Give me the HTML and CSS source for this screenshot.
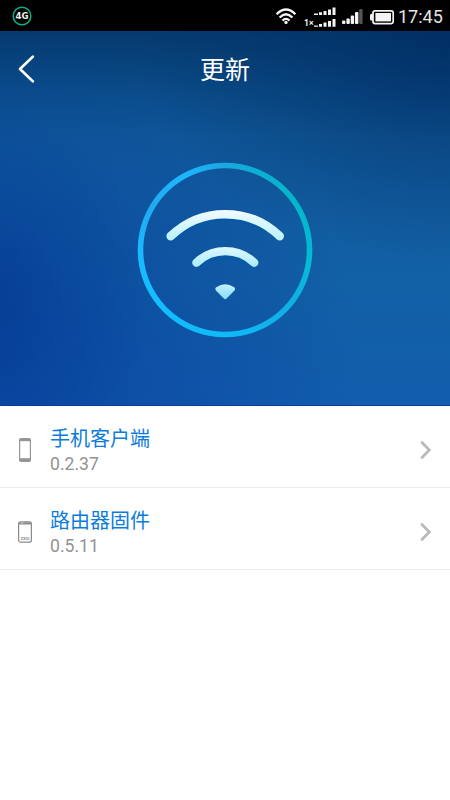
FILE: index.html
```
<!DOCTYPE html>
<html lang="zh-CN">
<head>
    <meta charset="UTF-8">
    <meta name="viewport" content="width=device-width, initial-scale=1.0">
    <title>更新</title>
    <link rel="stylesheet" href="styles.css">
</head>
<body>
    <div class="status-bar">
        <svg class="network" width="20" height="20" viewBox="0 0 20 20">
            <circle cx="10" cy="10" r="8.8" fill="none" stroke="#0cb18c" stroke-width="1.5"/>
            <text x="10" y="13.2" text-anchor="middle" textLength="13" lengthAdjust="spacingAndGlyphs">4G</text>
        </svg>

        <svg class="status-icons" width="122" height="31" viewBox="0 0 122 31">
            <!-- wifi -->
            <g fill="none" stroke="#f4f4f4" stroke-width="2.3">
                <path d="M4.6 14.2Q14 4.9 23.4 14.2"/>
                <path d="M7.6 17.5Q14 11 20.4 17.5"/>
                <path d="M10.5 20.6Q14 17.2 17.5 20.6"/>
            </g>
            <circle cx="14" cy="22.4" r="1.7" fill="#f4f4f4"/>
            <!-- dual sim signal -->
            <g fill="#f4f4f4">
                <path d="M42 13.6h4v1.4h-4zM47 12.2h3v2.8h-3zM51.5 11h3v4h-3zM56 9.5h3v5.5h-3zM60.5 7.5h3v7.5h-3z"/>
                <path d="M42 25.4h4v1.4h-4zM47 24h3v2.8h-3zM51.5 22.6h3v4.2h-3zM56 21h3v5.8h-3zM60.5 19h3v7.8h-3z"/>
                <text x="32" y="26" textLength="9.5" lengthAdjust="spacingAndGlyphs">1×</text>
            </g>
            <!-- signal -->
            <g fill="#f4f4f4">
                <rect x="70" y="20.5" width="3.4" height="3.5" rx="1"/>
                <rect x="74.4" y="18.5" width="3.4" height="5.5" rx="1"/>
                <rect x="78.7" y="15.5" width="3.4" height="8.5" rx="1"/>
                <rect x="83" y="12" width="3.4" height="12" rx="1"/>
                <rect x="87.2" y="9" width="3.4" height="15" rx="1" fill="#555"/>
            </g>
            <!-- battery -->
            <rect x="98" y="13.8" width="5" height="6.6" rx="1.5" fill="#f4f4f4"/>
            <rect x="101" y="10.8" width="20.2" height="12.8" rx="2" fill="#000" stroke="#f4f4f4" stroke-width="1.7"/>
            <rect x="103.4" y="13" width="15.6" height="8.4" fill="#f4f4f4"/>
        </svg>
        <span class="time">17:45</span>
    </div>

    <div class="hero">
        <div class="title-bar">
            <svg class="back" width="18" height="30" viewBox="0 0 18 30">
                <path d="M14.9 2.6L2 15L14.9 27.4" fill="none" stroke="#fff" stroke-width="2.7" stroke-linecap="round" stroke-linejoin="round"/>
            </svg>
            <h1>更新</h1>
        </div>

        <div class="ring">
            <svg width="176" height="176" viewBox="0 0 176 176">
                <defs>
                    <linearGradient id="wave" gradientUnits="userSpaceOnUse" x1="0" y1="47" x2="0" y2="80">
                        <stop offset="0" stop-color="#f3fcff"/>
                        <stop offset="1" stop-color="#b5f1fa"/>
                    </linearGradient>
                    <linearGradient id="wave-small" gradientUnits="userSpaceOnUse" x1="0" y1="84" x2="0" y2="106">
                        <stop offset="0" stop-color="#e0f8ff"/>
                        <stop offset="1" stop-color="#a8ebfb"/>
                    </linearGradient>
                    <linearGradient id="dot" x1="0" y1="0" x2="0" y2="1">
                        <stop offset="0" stop-color="#c4f1fd"/>
                        <stop offset="1" stop-color="#82ddfd"/>
                    </linearGradient>
                </defs>
                <g fill="none" stroke="#005aab" stroke-width="8" stroke-linecap="round" opacity=".45">
                    <path d="M50 65A78.5 78.5 0 0 1 126 65"/>
                    <path d="M68 98A41.8 41.8 0 0 1 108 98"/>
                </g>
                <path d="M33.7 74.2A78.5 78.5 0 0 1 142.7 74.2" fill="none" stroke="url(#wave)" stroke-width="8.6" stroke-linecap="round"/>
                <path d="M59.4 100.7A41.8 41.8 0 0 1 117.2 100.7" fill="none" stroke="url(#wave-small)" stroke-width="8.4" stroke-linecap="round"/>
                <path d="M79.2 125.2Q88.2 119.2 97.2 125.2Q99 126.9 97 129L89.6 136.6Q88.2 138 86.8 136.6L79.4 129Q77.4 126.9 79.2 125.2z" fill="url(#dot)"/>
            </svg>
        </div>
    </div>

    <ul class="list">
        <li>
            <svg class="device" width="18" height="26" viewBox="0 0 18 26">
                <rect x="3" y="1" width="12" height="24" rx="2" fill="#959595"/>
                <rect x="4.2" y="4.2" width="9.6" height="17" fill="#fff"/>
            </svg>
            <div class="info">
                <h2>手机客户端</h2>
                <p>0.2.37</p>
            </div>
            <svg class="arrow" width="12" height="20" viewBox="0 0 12 20">
                <path d="M2 2.5L9.3 10L2 17.5" fill="none" stroke="#b9b9b9" stroke-width="2.7" stroke-linecap="round"/>
            </svg>
        </li>
        <li>
            <svg class="device" width="18" height="26" viewBox="0 0 18 26">
                <rect x="2.6" y="2.8" width="12.8" height="20.4" rx="2" fill="#fff" stroke="#8c8c8c" stroke-width="1.2"/>
                <path d="M3 4.4h12" stroke="#8c8c8c" stroke-width="2.2"/>
                <path d="M4.5 3.9h3" stroke="#ddd" stroke-width=".8"/>
                <text x="9" y="20.5" text-anchor="middle" textLength="9" lengthAdjust="spacingAndGlyphs">ZXIU</text>
            </svg>
            <div class="info">
                <h2>路由器固件</h2>
                <p>0.5.11</p>
            </div>
            <svg class="arrow" width="12" height="20" viewBox="0 0 12 20">
                <path d="M2 2.5L9.3 10L2 17.5" fill="none" stroke="#b9b9b9" stroke-width="2.7" stroke-linecap="round"/>
            </svg>
        </li>
    </ul>
</body>
</html>
```

FILE: styles.css
```
* {
    box-sizing: border-box;
    margin: 0;
    padding: 0;
}

body {
    font-family: Roboto, "Noto Sans CJK SC", sans-serif;
    background-color: #fff;
    min-height: 800px;
}

.status-bar {
    display: flex;
    align-items: center;
    height: 31px;
    padding: 0 7px 0 12px;
    background-color: #000;
}

.network text {
    font: bold 9px "DejaVu Sans", sans-serif;
    fill: #eee;
}

.status-icons {
    margin-left: auto;
}

.status-icons text {
    font: bold 9px Roboto, sans-serif;
}

.time {
    width: 45px;
    margin-left: 4px;
    padding-top: 3px;
    color: #e4e4e4;
    font-size: 18px;
    line-height: 28px;
    white-space: nowrap;
}

.hero {
    height: 375px;
    border-bottom: 1px solid #0b3e9b;
    background:
        radial-gradient(ellipse 170px 190px at -20px 265px, rgba(3, 58, 145, 0.75), rgba(3, 58, 145, 0.3) 50%, rgba(3, 58, 145, 0)),
        radial-gradient(ellipse 330px 230px at 460px 0, rgba(0, 44, 98, 0.8), rgba(0, 44, 98, 0.35) 50%, rgba(0, 44, 98, 0)),
        radial-gradient(ellipse 360px 330px at 0 330px, rgba(8, 64, 158, 0.75), rgba(8, 64, 158, 0.4) 50%, rgba(8, 64, 158, 0)),
        linear-gradient(180deg, #053a70 0, #074178 25px, #0a4c88 60px, #105898 105px, #115c9f 160px, #1260a5 250px, #125dad 375px);
}

.title-bar {
    display: flex;
    align-items: center;
    height: 76px;
    padding: 0 18px;
}

.title-bar h1 {
    flex: 1;
    margin-right: 18px;
    padding-top: 3px;
    color: #fff;
    font-size: 25px;
    font-weight: 400;
    line-height: 36px;
    text-align: center;
}

/* the ring is a conic gradient with the hole masked out */
.ring {
    position: relative;
    width: 176px;
    height: 176px;
    margin: 55px auto 0;
}

.ring::before {
    content: "";
    position: absolute;
    inset: 0;
    border-radius: 50%;
    background: conic-gradient(#1ba6e2 0deg, #0ab0d0 30deg, #03b7cc 60deg, #06b9d6 100deg, #12afe7 135deg, #0fb9f5 175deg, #13bfff 240deg, #1bb7ff 270deg, #20aaf0 300deg, #1eb7ff 330deg, #1ba6e2 360deg);
    -webkit-mask: radial-gradient(circle, transparent 81.2px, #000 82.2px, #000 86.8px, transparent 87.8px);
    mask: radial-gradient(circle, transparent 81.2px, #000 82.2px, #000 86.8px, transparent 87.8px);
}

.ring svg {
    display: block;
}

.list {
    list-style: none;
}

.list li {
    display: flex;
    align-items: center;
    height: 82px;
    padding: 6px 18px 0 16px;
    border-bottom: 1px solid #ededed;
}

.device text {
    font: bold 4px Roboto, sans-serif;
    fill: #8c8c8c;
}

.info {
    flex: 1;
    margin-left: 16px;
    padding-top: 3px;
}

.info h2 {
    color: #0c7cdb;
    font-size: 20px;
    font-weight: 400;
    line-height: 26px;
}

.info p {
    color: #929292;
    font-size: 17.6px;
    line-height: 24px;
}
```
